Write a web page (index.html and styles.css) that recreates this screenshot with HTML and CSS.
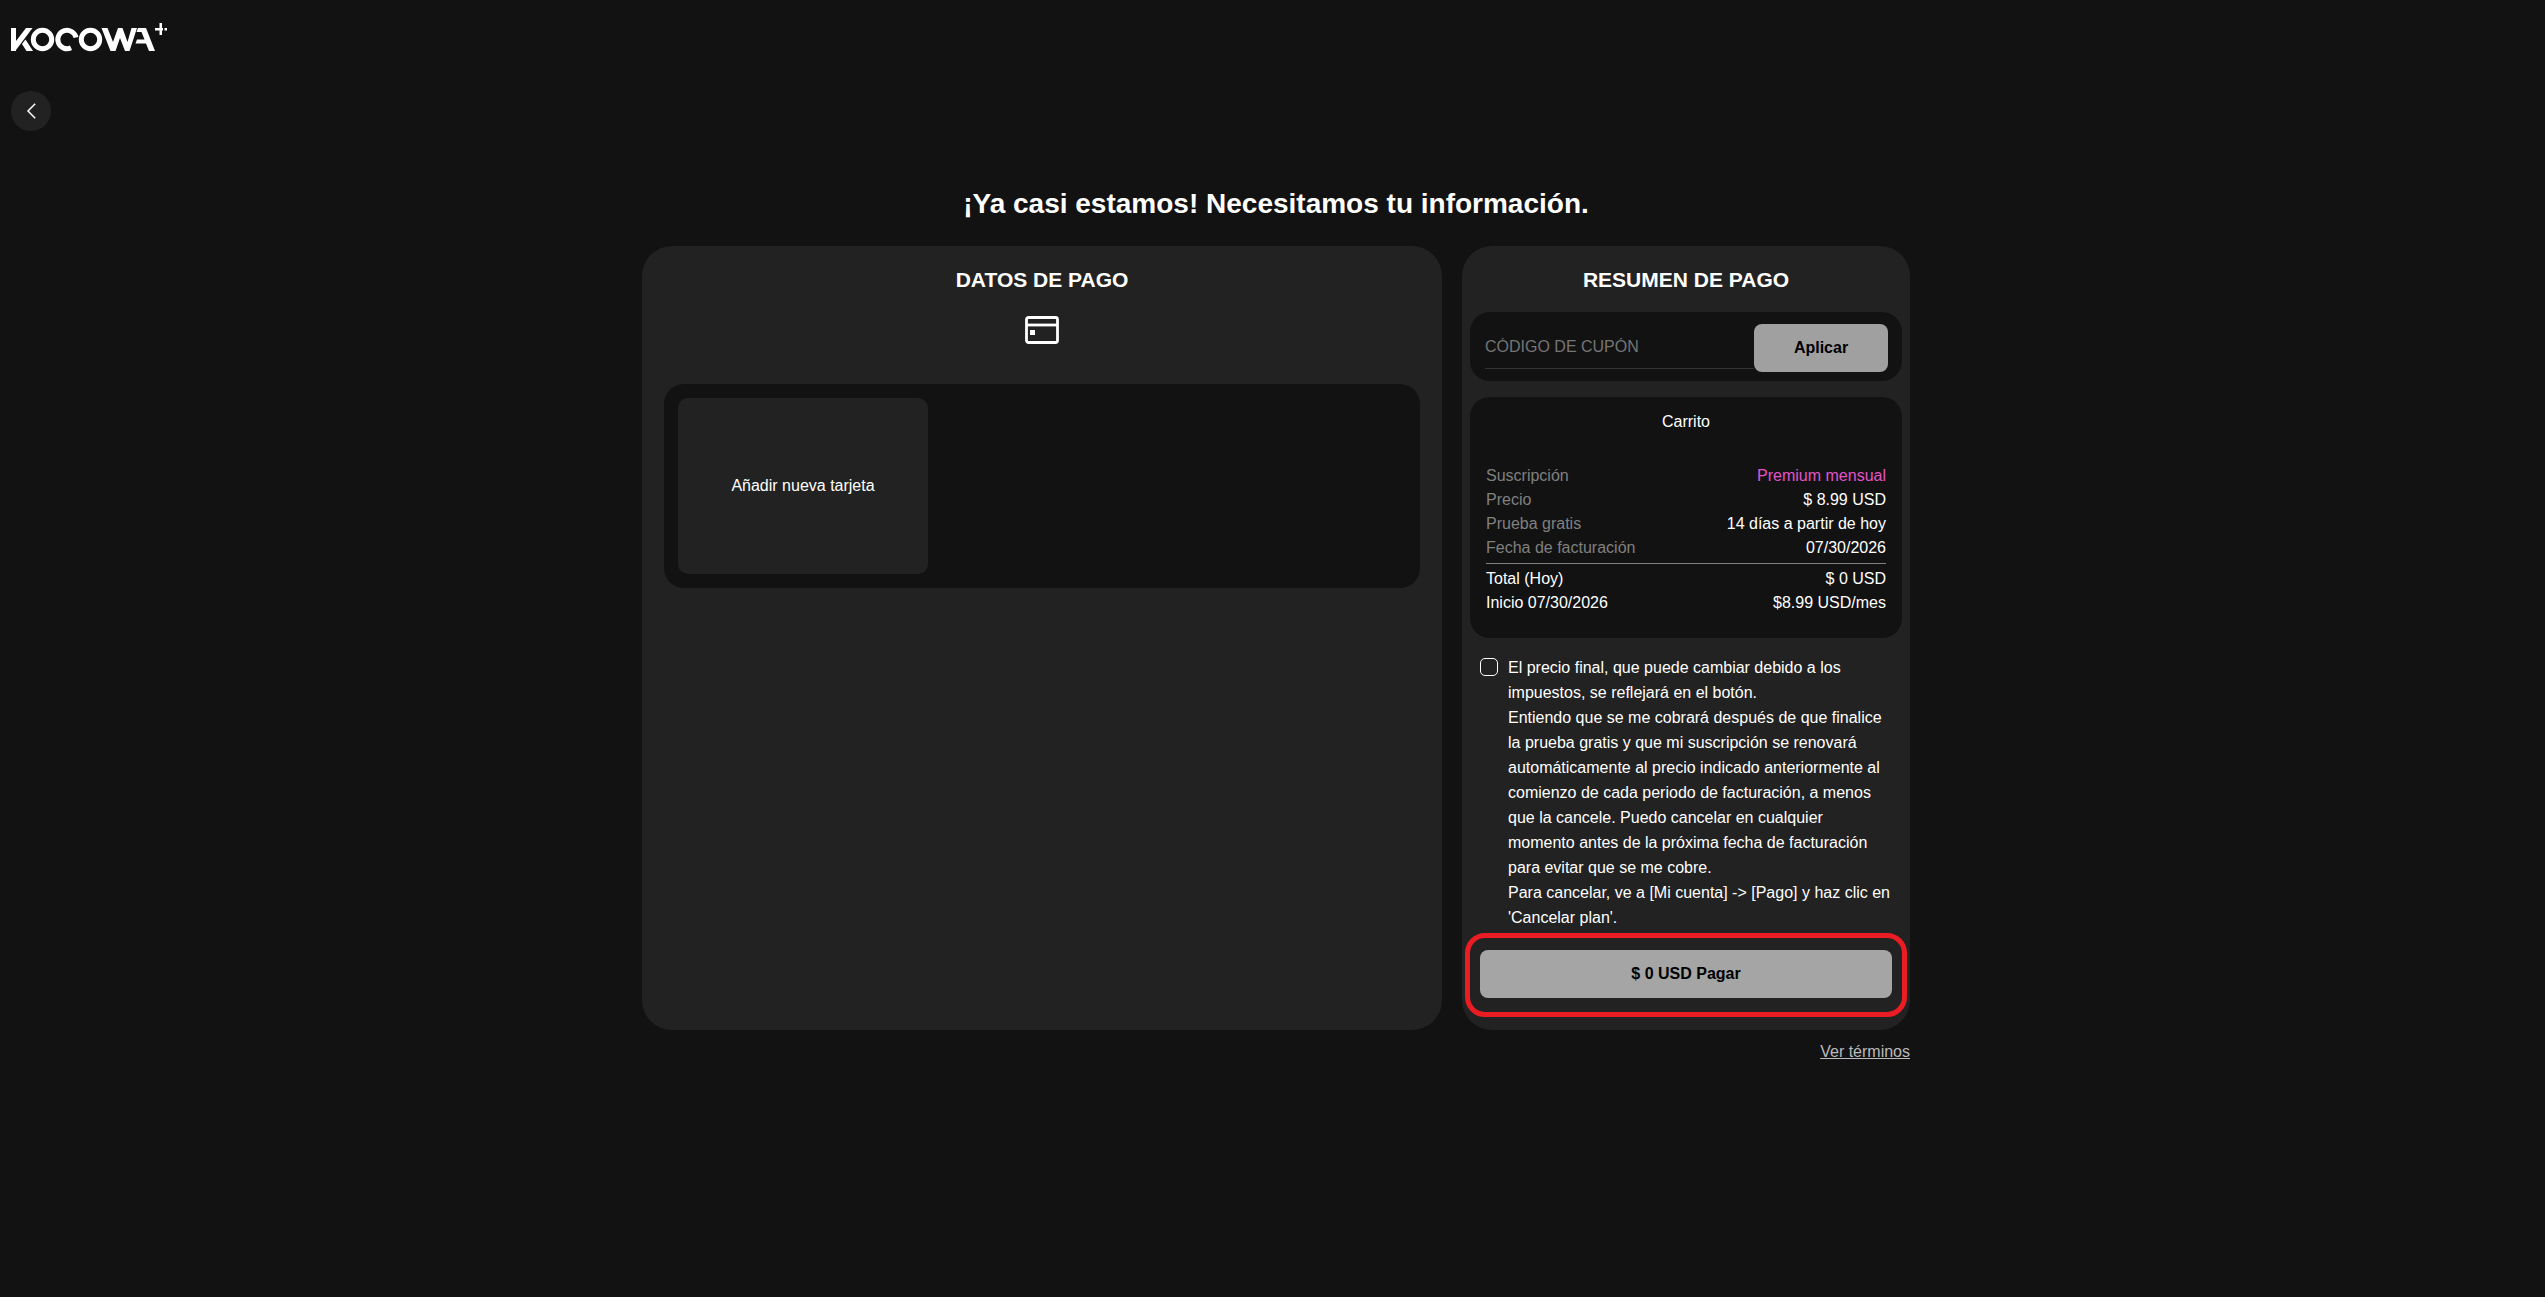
FILE: index.html
```html
<!DOCTYPE html>
<html lang="es">
<head>
<meta charset="utf-8">
<title>KOCOWA+ | Datos de pago</title>
<meta name="viewport" content="width=device-width, initial-scale=1">
<link rel="stylesheet" href="styles.css">
</head>
<body>
<header class="header">
  <a class="logo" href="#" aria-label="KOCOWA+">
    <svg width="156" height="30" viewBox="0 0 156 30" aria-hidden="true">
      <g fill="#fff">
        <path d="M0 5H5V18L15 5H21.500L5 27V28H0Z"/>
        <path d="M11 21L14.500 16.500L22 28H15.500Z"/>
        <path d="M90.500 5H96.500L102 19L107 5H111.500L116.500 19L120.500 5H126L118.500 28H114L109 15L104.500 28H99.500Z"/>
        <path d="M127 5H135L144 28H138L135 20.500H124.500L126 16.500H133.500L130.500 9H125.500Z"/>
        <path d="M148.500 0H151V12H148.500V7.500H144V5H148.500Z"/>
        <path d="M151 5H152V7.500H151Z"/>
        <rect x="153.500" y="5" width="2.500" height="2.500"/>
      </g>
      <g fill="none" stroke="#fff" stroke-width="5">
        <circle cx="31.500" cy="16.500" r="9.200"/>
        <path d="M65 14.500A9.200 9.200 0 1 0 60 24.800"/>
        <circle cx="79.500" cy="16.500" r="9.200"/>
      </g>
    </svg>
  </a>
  <button class="back" type="button" aria-label="Volver">
    <svg width="10" height="16" viewBox="0 0 10 16" fill="none" stroke="#fff" stroke-width="1.500" aria-hidden="true"><path d="M9.200 0.800L2 8L9.200 15.200"/></svg>
  </button>
</header>
<main class="checkout">
  <h1 class="title">¡Ya casi estamos! Necesitamos tu información.</h1>
  <div class="columns">
    <section class="card payment">
      <h2 class="card-title">DATOS DE PAGO</h2>
      <svg class="card-icon" width="34" height="28" viewBox="0 0 34 28" aria-hidden="true">
        <rect x="1.500" y="1.500" width="31" height="25" rx="2" fill="none" stroke="#fff" stroke-width="2.800"/>
        <path d="M2 9H32" stroke="#fff" stroke-width="2.800"/>
        <rect x="5" y="14" width="5" height="5" fill="#fff"/>
      </svg>
      <div class="panel methods">
        <button class="add-card" type="button">Añadir nueva tarjeta</button>
      </div>
    </section>
    <section class="card summary">
      <h2 class="card-title">RESUMEN DE PAGO</h2>
      <form class="panel coupon">
        <input class="coupon-input" type="text" placeholder="CÓDIGO DE CUPÓN" aria-label="Código de cupón">
        <button class="button apply" type="button">Aplicar</button>
      </form>
      <div class="panel cart">
        <h3 class="cart-title">Carrito</h3>
        <dl class="rows">
          <div class="row"><dt>Suscripción</dt><dd class="plan">Premium mensual</dd></div>
          <div class="row"><dt>Precio</dt><dd>$ 8.99 USD</dd></div>
          <div class="row"><dt>Prueba gratis</dt><dd>14 días a partir de hoy</dd></div>
          <div class="row"><dt>Fecha de facturación</dt><dd>07/30/2026</dd></div>
        </dl>
        <dl class="rows totals">
          <div class="row"><dt>Total (Hoy)</dt><dd>$ 0 USD</dd></div>
          <div class="row"><dt>Inicio 07/30/2026</dt><dd>$8.99 USD/mes</dd></div>
        </dl>
      </div>
      <div class="consent">
        <input class="check" type="checkbox" id="consent">
        <label for="consent">El precio final, que puede cambiar debido a los impuestos, se reflejará en el botón.<br>Entiendo que se me cobrará después de que finalice la prueba gratis y que mi suscripción se renovará automáticamente al precio indicado anteriormente al comienzo de cada periodo de facturación, a menos que la cancele. Puedo cancelar en cualquier momento antes de la próxima fecha de facturación para evitar que se me cobre.<br>Para cancelar, ve a [Mi cuenta] -&gt; [Pago] y haz clic en 'Cancelar plan'.</label>
      </div>
      <div class="pay-frame">
        <button class="button pay" type="button">$ 0 USD Pagar</button>
      </div>
    </section>
  </div>
  <a class="terms" href="#">Ver términos</a>
</main>
</body>
</html>
```
FILE: styles.css
```css
* {
  box-sizing: border-box;
}

body {
  margin: 0;
  background: #121212;
  color: #fff;
  font: 16px/24px "Liberation Sans", Arial, sans-serif;
}

button,
input {
  font: inherit;
}

h1, h2, h3, dl, dd {
  margin: 0;
}

.header {
  display: flex;
  flex-direction: column;
  align-items: flex-start;
  gap: 38px;
  padding: 23px 11px 0;
}

.logo,
.logo svg {
  display: block;
}

.back {
  display: flex;
  align-items: center;
  justify-content: center;
  width: 40px;
  height: 40px;
  padding: 0;
  border: 0;
  border-radius: 50%;
  background: #222;
  cursor: pointer;
}

.checkout {
  display: flex;
  flex-direction: column;
  max-width: 1275px;
  margin: 0 auto;
  padding: 53px 0 24px 7px;
}

.title {
  font-size: 28px;
  line-height: 40px;
  text-align: center;
}

.columns {
  display: flex;
  gap: 20px;
  margin-top: 22px;
}

.card {
  border-radius: 30px;
  background: #222;
}

.card-title {
  font-size: 21px;
  line-height: 26px;
  text-align: center;
}

.panel {
  border-radius: 20px;
  background: #121212;
}

.payment {
  flex: 1 1 800px;
  display: flex;
  flex-direction: column;
  padding: 21px 22px;
}

.card-icon {
  margin: 23px auto 40px;
}

.methods {
  padding: 14px;
}

.add-card {
  display: block;
  width: 250px;
  height: 176px;
  border: 0;
  border-radius: 10px;
  background: #222;
  color: #fff;
  cursor: pointer;
}

.summary {
  flex: 0 0 448px;
  padding: 21px 8px 13px;
}

.coupon {
  display: flex;
  align-items: center;
  margin-top: 19px;
  padding: 12px 14px 9px 15px;
}

.coupon-input {
  flex: 1;
  min-width: 0;
  height: 42px;
  padding: 0 0 2px;
  border: 0;
  border-bottom: 1px solid #333;
  outline: 0;
  background: none;
  color: #fff;
}

.coupon-input::placeholder {
  color: #757575;
  opacity: 1;
}

.button {
  height: 48px;
  border: 0;
  border-radius: 8px;
  color: #000;
  font-weight: 700;
  cursor: pointer;
}

.apply {
  width: 134px;
  background: #a0a0a0;
}

.cart {
  margin-top: 16px;
  padding: 13px 16px 23px;
}

.cart-title {
  margin-bottom: 30px;
  font-size: 16px;
  font-weight: 400;
  text-align: center;
}

.row {
  display: flex;
  justify-content: space-between;
}

.rows dt {
  color: #808080;
}

.plan {
  color: #e254ca;
}

.totals {
  margin-top: 3px;
  padding-top: 3px;
  border-top: 1px solid #808080;
}

.totals dt {
  color: #fff;
}

.consent {
  display: flex;
  align-items: flex-start;
  gap: 10px;
  margin-top: 17px;
  padding: 0 8px 0 10px;
  line-height: 25px;
}

.check {
  flex: none;
  appearance: none;
  width: 18px;
  height: 18px;
  margin: 3px 0 0;
  border: 1px solid #fff;
  border-radius: 5px;
}

.check:checked {
  background: #e254ca;
}

.pay-frame {
  margin: 3px -5px 0;
  padding: 12px 10px 14px;
  border: 5px solid #ea1d25;
  border-radius: 20px;
}

.pay {
  display: block;
  width: 100%;
  background: #a5a5a5;
}

.terms {
  align-self: flex-end;
  margin-top: 10px;
  color: #bbb;
}
```
